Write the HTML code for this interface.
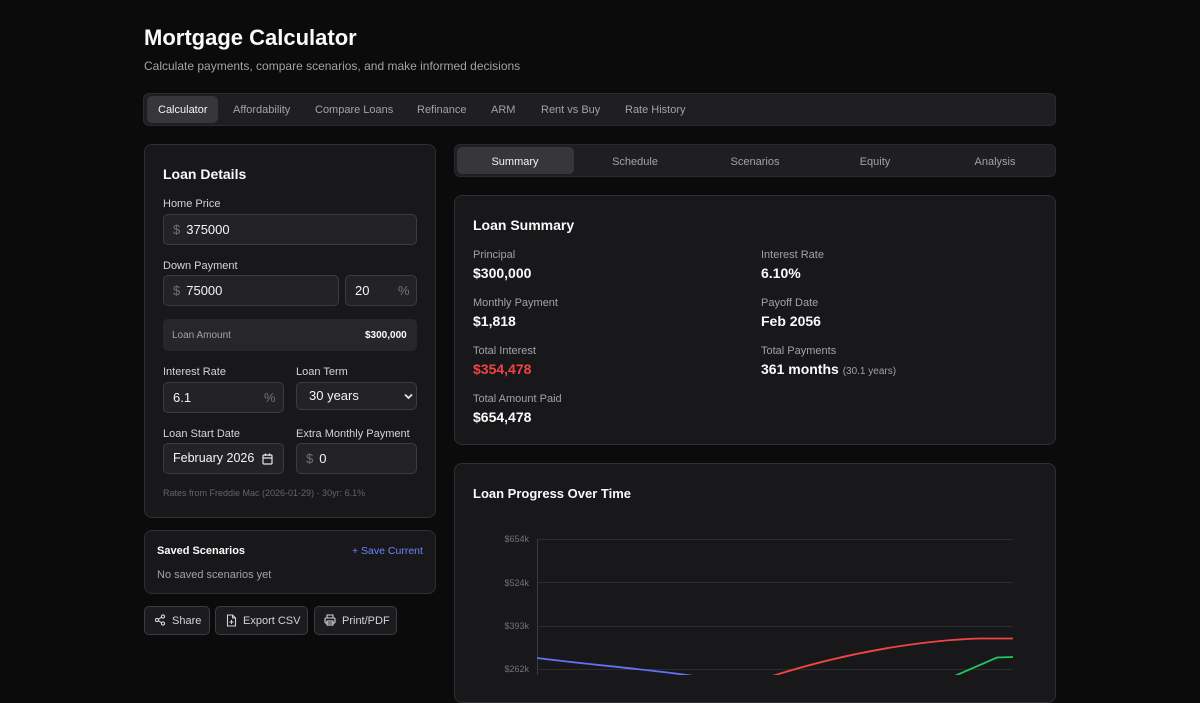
<!DOCTYPE html>
<html><head><meta charset="utf-8"><style>
*{box-sizing:border-box;margin:0;padding:0}
body{width:1200px;height:675px;overflow:hidden;background:#0b0b0c;font-family:"Liberation Sans",sans-serif;color:#fafafa;position:relative}
.a{position:absolute}
.card{position:absolute;background:#18181b;border:1px solid #2f2f34;border-radius:8px}
.lbl{position:absolute;font-size:11px;color:#d4d4d8}
.inp{position:absolute;background:#232326;border:1px solid #3b3b40;border-radius:5px;height:31px;font-size:13px;color:#f4f4f5;line-height:29px;padding-left:9px}
.inp .d{color:#71717a;margin-right:6px}
.tab{position:absolute;font-size:11px;color:#a1a1aa;top:0;line-height:28px;text-align:center}
.sl{position:absolute;font-size:11px;color:#a1a1aa}
.sv{position:absolute;font-size:14px;font-weight:bold;color:#fafafa}
.btn{position:absolute;top:606px;height:29px;border:1px solid #3b3b40;background:#1c1c1f;border-radius:5px;font-size:11px;color:#d4d4d8;line-height:28px;padding-left:38px}
.btn svg{position:absolute;left:10px;top:7px}
.yl{position:absolute;font-size:9px;color:#71717a;right:671px}
</style></head><body>
<div class="a" style="left:144px;top:25px;font-size:22px;font-weight:bold">Mortgage Calculator</div>
<div class="a" style="left:144px;top:59px;font-size:12px;color:#a1a1aa">Calculate payments, compare scenarios, and make informed decisions</div>

<div class="a" style="left:143px;top:93px;width:913px;height:33px;background:#1f1f22;border:1px solid #2a2a2e;border-radius:6px"></div>
<div class="a" style="left:147px;top:96px;width:71px;height:27px;background:#36363b;border-radius:5px"></div>
<div class="a" style="top:104px;left:0;font-size:11px;color:#a1a1aa">
<span class="a" style="left:158px;color:#f4f4f5">Calculator</span>
<span class="a" style="left:233px;white-space:nowrap">Affordability</span>
<span class="a" style="left:315px;white-space:nowrap">Compare Loans</span>
<span class="a" style="left:417px">Refinance</span>
<span class="a" style="left:491px">ARM</span>
<span class="a" style="left:541px;white-space:nowrap">Rent vs Buy</span>
<span class="a" style="left:625px;white-space:nowrap">Rate History</span>
</div>

<div class="card" style="left:144px;top:144px;width:292px;height:374px"></div>
<div class="a" style="left:163px;top:166px;font-size:14px;font-weight:bold">Loan Details</div>
<div class="lbl" style="left:163px;top:198px">Home Price</div>
<div class="inp" style="left:163px;top:214px;width:254px"><span class="d">$</span>375000</div>
<div class="lbl" style="left:163px;top:260px">Down Payment</div>
<div class="inp" style="left:163px;top:275px;width:176px"><span class="d">$</span>75000</div>
<div class="inp" style="left:345px;top:275px;width:72px;padding-left:9px">20<span class="d" style="position:absolute;right:0;left:52px">%</span></div>
<div class="a" style="left:163px;top:319px;width:254px;height:32px;background:#27272a;border-radius:5px"></div>
<div class="a" style="left:172px;top:330px;font-size:10px;color:#a1a1aa">Loan Amount</div>
<div class="a" style="left:365px;top:330px;font-size:10px;font-weight:bold">$300,000</div>
<div class="lbl" style="left:163px;top:366px">Interest Rate</div>
<div class="lbl" style="left:296px;top:366px">Loan Term</div>
<div class="inp" style="left:163px;top:382px;width:121px">6.1<span class="d" style="position:absolute;left:100px">%</span></div>
<div class="inp" style="left:296px;top:382px;width:121px;height:28px;line-height:26px;padding-left:12px">30 years
<svg class="a" style="left:107px;top:10px" width="9" height="7" viewBox="0 0 9 7"><path d="M1 1.5L4.5 5L8 1.5" stroke="#e4e4e7" stroke-width="1.8" fill="none"/></svg></div>
<div class="lbl" style="left:163px;top:428px">Loan Start Date</div>
<div class="lbl" style="left:296px;top:428px">Extra Monthly Payment</div>
<div class="inp" style="left:163px;top:443px;width:121px;padding-left:9px;font-size:12.5px">February 2026
<svg class="a" style="left:98px;top:9px" width="11" height="12" viewBox="0 0 11 12"><rect x="1" y="2" width="9" height="9" rx="1" stroke="#e4e4e7" stroke-width="1.2" fill="none"/><path d="M1 5h9M3.5 0.5v2.5M7.5 0.5v2.5" stroke="#e4e4e7" stroke-width="1.2"/></svg></div>
<div class="inp" style="left:296px;top:443px;width:121px"><span class="d">$</span>0</div>
<div class="a" style="left:163px;top:488px;font-size:9px;color:#63636b">Rates from Freddie Mac (2026-01-29) · 30yr: 6.1%</div>

<div class="card" style="left:144px;top:530px;width:292px;height:64px"></div>
<div class="a" style="left:157px;top:545px;font-size:11px;font-weight:bold">Saved Scenarios</div>
<div class="a" style="left:352px;top:545px;font-size:10.5px;color:#6b84ff">+ Save Current</div>
<div class="a" style="left:157px;top:569px;font-size:11px;color:#a1a1aa">No saved scenarios yet</div>

<div class="btn" style="left:144px;width:66px;padding-left:27px">
<svg style="left:9px" width="12" height="12" viewBox="0 0 12 12" fill="none" stroke="#d4d4d8" stroke-width="1.1"><circle cx="9" cy="2.5" r="1.6"/><circle cx="3" cy="6" r="1.6"/><circle cx="9" cy="9.5" r="1.6"/><path d="M4.4 5.2L7.6 3.3M4.4 6.8L7.6 8.7"/></svg>Share</div>
<div class="btn" style="left:215px;width:93px;padding-left:27px">
<svg style="left:10px" width="11" height="13" viewBox="0 0 11 13" fill="none" stroke="#d4d4d8" stroke-width="1.1"><path d="M1.5 1h5l3 3v8h-8z M6.5 1v3h3"/><path d="M5.5 6v4M3.5 8h4"/></svg>Export CSV</div>
<div class="btn" style="left:314px;width:83px;padding-left:27px">
<svg style="left:9px" width="12" height="12" viewBox="0 0 12 12" fill="none" stroke="#d4d4d8" stroke-width="1.1"><path d="M3 4V1h6v3"/><rect x="1" y="4" width="10" height="5" rx="1"/><rect x="3" y="7" width="6" height="4"/></svg>Print/PDF</div>

<div class="a" style="left:454px;top:144px;width:602px;height:33px;background:#1f1f22;border:1px solid #2a2a2e;border-radius:6px"></div>
<div class="a" style="left:457px;top:147px;width:117px;height:27px;background:#36363b;border-radius:5px"></div>
<div class="a" style="left:455px;top:147px;width:600px;height:28px">
<div class="tab" style="left:0;width:120px;color:#f4f4f5;top:1px">Summary</div>
<div class="tab" style="left:120px;width:120px;top:1px">Schedule</div>
<div class="tab" style="left:240px;width:120px;top:1px">Scenarios</div>
<div class="tab" style="left:360px;width:120px;top:1px">Equity</div>
<div class="tab" style="left:480px;width:120px;top:1px">Analysis</div>
</div>

<div class="card" style="left:454px;top:195px;width:602px;height:250px"></div>
<div class="a" style="left:473px;top:217px;font-size:14px;font-weight:bold">Loan Summary</div>
<div class="sl" style="left:473px;top:249px">Principal</div><div class="sv" style="left:473px;top:265px">$300,000</div>
<div class="sl" style="left:761px;top:249px">Interest Rate</div><div class="sv" style="left:761px;top:265px">6.10%</div>
<div class="sl" style="left:473px;top:297px">Monthly Payment</div><div class="sv" style="left:473px;top:313px">$1,818</div>
<div class="sl" style="left:761px;top:297px">Payoff Date</div><div class="sv" style="left:761px;top:313px">Feb 2056</div>
<div class="sl" style="left:473px;top:345px">Total Interest</div><div class="sv" style="left:473px;top:361px;color:#ef4444">$354,478</div>
<div class="sl" style="left:761px;top:345px">Total Payments</div><div class="sv" style="left:761px;top:361px;white-space:nowrap">361 months <span style="font-size:10px;font-weight:normal;color:#a1a1aa">(30.1 years)</span></div>
<div class="sl" style="left:473px;top:393px">Total Amount Paid</div><div class="sv" style="left:473px;top:409px">$654,478</div>

<div class="card" style="left:454px;top:463px;width:602px;height:240px"></div>
<div class="a" style="left:473px;top:486px;font-size:13px;font-weight:bold">Loan Progress Over Time</div>
<div class="yl" style="top:534px">$654k</div>
<div class="yl" style="top:578px">$524k</div>
<div class="yl" style="top:621px">$393k</div>
<div class="yl" style="top:664px">$262k</div>
<svg class="a" style="left:0;top:0" width="1200" height="675">
<g stroke="#2c2c30" stroke-width="1"><path d="M537 539.5H1013M537 582.5H1013M537 626.5H1013M537 669.5H1013"/></g>
<path d="M537.5 539V675" stroke="#3a3a3f"/>
<path d="M537 658 C600 666 660 670 720 680" stroke="#6272f5" stroke-width="1.8" fill="none"/>
<path d="M760 680 C850 650 930 640 980 638.5 L1013 638.5" stroke="#ef4444" stroke-width="1.8" fill="none"/>
<path d="M950 678 L997 657.5 L1013 657" stroke="#22c55e" stroke-width="1.8" fill="none"/>
</svg>
</body></html>
